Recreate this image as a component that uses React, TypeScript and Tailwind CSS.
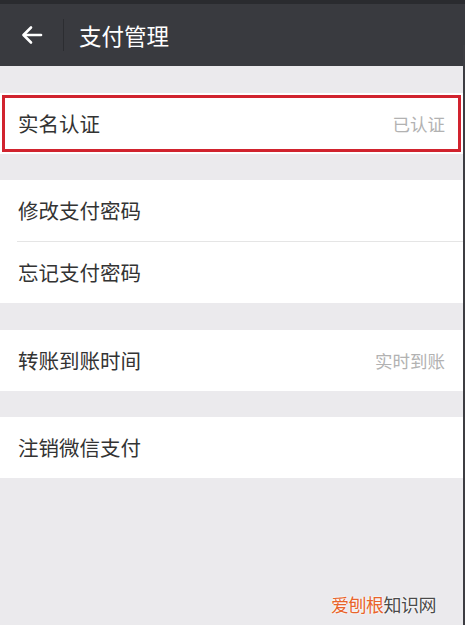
import React from "react";

const font = { fontFamily: '"Noto Sans CJK SC", "Noto Sans", sans-serif' };

function Row({ label, value }: { label: string; value?: string }) {
  return (
    <div className="flex h-[61px] items-center justify-between bg-white pl-[18px] pr-[20px]">
      <span className="text-[20.5px] leading-none text-[#333333]">{label}</span>
      {value && <span className="text-[17.5px] leading-none text-[#b2b2b2]">{value}</span>}
    </div>
  );
}

export default function App() {
  return (
    <div className="relative h-[625px] w-[465px] overflow-hidden bg-[#ebeaed]" style={font}>
      <div className="h-[4px] bg-[#2a2b2f]" />
      <div className="flex h-[62px] items-center bg-[#393a3f]">
        <div className="flex w-[63px] items-center pl-[21px]">
          <svg width="22" height="20" viewBox="0 0 22 20" fill="none" stroke="#ffffff" strokeWidth="2.6" strokeLinecap="round" strokeLinejoin="round">
            <path d="M20 10H3" />
            <path d="M10 2.5 2.5 10 10 17.5" />
          </svg>
        </div>
        <div className="h-[32px] w-px bg-[#2c2d31]" />
        <span className="ml-[15px] text-[22.5px] leading-none text-white">支付管理</span>
      </div>

      <div className="mt-[27px] relative">
        <Row label="实名认证" value="已认证" />
        <div className="pointer-events-none absolute left-[2px] right-[4px] top-[2px] bottom-[2px] border-[3px] border-[#d1232e]" />
      </div>

      <div className="mt-[26px] bg-white">
        <Row label="修改支付密码" />
        <div className="ml-[17px] h-px bg-[#e5e5e5]" />
        <Row label="忘记支付密码" />
      </div>

      <div className="mt-[27px]">
        <Row label="转账到账时间" value="实时到账" />
      </div>

      <div className="mt-[26px]">
        <Row label="注销微信支付" />
      </div>

      <div className="absolute right-0 top-[45px] bottom-0 w-[2px] bg-[#3d3d42]" />

      <div
        className="absolute left-[331px] top-[595px] text-[18px] leading-none tracking-[-0.5px]"
        style={{ textShadow: "0 0 2px #fff, 0 0 2px #fff" }}
      >
        <span className="text-[#e8652b]">爱刨根</span>
        <span className="text-[#4a4a4a]">知识网</span>
      </div>
    </div>
  );
}
